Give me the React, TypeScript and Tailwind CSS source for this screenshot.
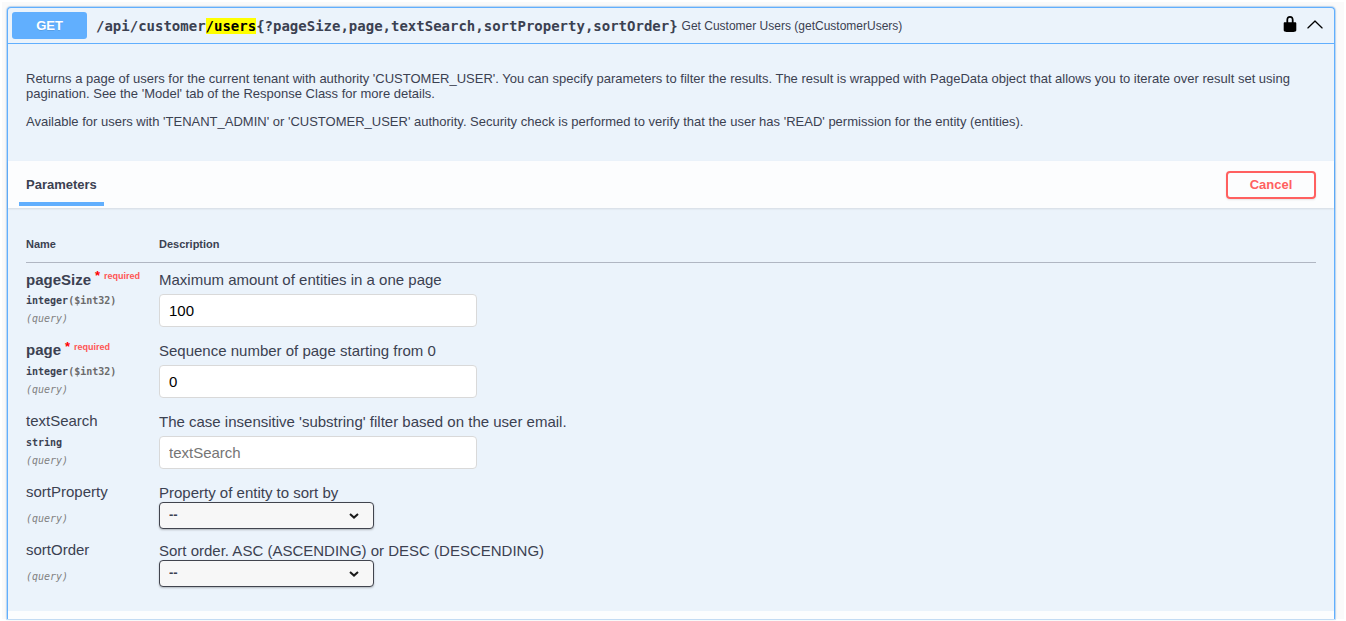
import { useState } from "react";

type Param = {
  name: string;
  type?: string;
  required?: boolean;
  description: string;
  value?: string;
  select?: boolean;
};

const params: Param[] = [
  { name: "pageSize", type: "integer", required: true, description: "Maximum amount of entities in a one page", value: "100" },
  { name: "page", type: "integer", required: true, description: "Sequence number of page starting from 0", value: "0" },
  { name: "textSearch", type: "string", description: "The case insensitive 'substring' filter based on the user email.", value: "" },
  { name: "sortProperty", description: "Property of entity to sort by", select: true },
  { name: "sortOrder", description: "Sort order. ASC (ASCENDING) or DESC (DESCENDING)", select: true },
];

const mono = "font-['DejaVu_Sans_Mono',monospace]";

function LockIcon() {
  return (
    <svg viewBox="0 0 20 20" className="size-[18px]" aria-hidden="true">
      <path d="M15.8 8H14V5.6C14 2.703 12.665 1 10 1 7.334 1 6 2.703 6 5.6V8H4c-.553 0-1 .646-1 1.199V17c0 .549.428 1.139.951 1.307l1.197.387C5.672 18.861 6.55 19 7.1 19h5.8c.549 0 1.428-.139 1.951-.307l1.196-.387c.524-.167.953-.757.953-1.306V9.199C17 8.646 16.352 8 15.8 8zM12 8H8V5.199C8 3.754 8.797 3 10 3c1.203 0 2 .754 2 2.199V8z" />
    </svg>
  );
}

function CollapseIcon() {
  return (
    <svg viewBox="0 0 20 20" className="size-[18px]" aria-hidden="true">
      <path d="M17.418 14.908c.272.281.701.281.969 0s.271-.736 0-1.018l-7.908-7.83a.697.697 0 0 0-.969 0L1.602 13.89c-.268.282-.268.737 0 1.018s.701.281.969 0L10 7.767l7.418 7.141z" />
    </svg>
  );
}

function ParamRow({ param }: { param: Param }) {
  const [value, setValue] = useState(param.value ?? "");
  const id = "param-" + param.name;
  return (
    <tr className="align-top">
      <td className="w-[133px] pt-[7px]">
        <label
          htmlFor={id}
          className={"flex h-5 items-center gap-1 text-[15px] whitespace-nowrap" + (param.required ? " font-bold" : "")}
        >
          {param.name}
          {param.required && (
            <span className="mb-2 flex gap-1 text-[9px] leading-3 text-[#ff0000]">
              <span className="text-[13px]">*</span>
              <span className="text-[#ff5555]">required</span>
            </span>
          )}
        </label>
        {param.type && (
          <div className={mono + " h-[21px] text-[10px] leading-[22px] font-bold"}>
            {param.type}
            {param.type === "integer" && <span className="text-[#6b6b6b]">($int32)</span>}
          </div>
        )}
        <div className={mono + " text-[10px] text-[#808080] italic " + (param.type ? "leading-4" : "pt-1 leading-6")}>(query)</div>
      </td>
      <td className={param.select ? "h-[58px] pt-[7px]" : "h-[71px] pt-[7px]"}>
        <p className="h-[19px] text-[15px] leading-5">{param.description}</p>
        {param.select ? (
          <div className="relative w-[215px]">
            <select
              id={id}
              className="block h-[27px] w-full appearance-none rounded border border-[#41444e] bg-[#f7f7f7] px-[9px] text-[13px] font-bold shadow-[0_1px_2px_0_rgba(0,0,0,0.25)]"
            >
              <option>--</option>
            </select>
            <svg
              viewBox="0 0 10 6"
              className="pointer-events-none absolute top-[11px] right-[15px] h-[6px] w-[10px]"
              fill="none"
              stroke="#1b1b1b"
              strokeWidth="2"
              aria-hidden="true"
            >
              <path d="M1 1l4 3.6L9 1" />
            </svg>
          </div>
        ) : (
          <input
            id={id}
            type="text"
            value={value}
            placeholder={param.name}
            onChange={(e) => setValue(e.target.value)}
            className="mt-[5px] block h-[33px] w-[318px] rounded border border-[#d9d9d9] bg-white px-[9px] text-[15px] text-black placeholder:text-[#757575]"
          />
        )}
      </td>
    </tr>
  );
}

export default function App() {
  return (
    <div className="min-h-screen bg-white px-[2px] pt-[2px] font-['Liberation_Sans',Arial,sans-serif] text-[#3b4151]">
      <main className="bg-[#fafafa] pt-[5px] pr-[9px] pl-[5px]">
        <section className="rounded-t border border-b-0 border-[#61affe] bg-[#ebf3fb] shadow-[0_0_0_1px_rgba(97,175,254,0.3),0_0_3px_rgba(0,0,0,0.19)]">
          <header className="flex items-center border-b border-[#61affe] p-1">
            <span className="w-[75px] rounded-[3px] bg-[#61affe] text-center text-[13px] leading-[27px] font-bold text-white [text-shadow:0_1px_0_rgba(0,0,0,0.1)]">
              GET
            </span>
            <h1 className={mono + " ml-[9px] text-[14px] leading-[18px] font-bold whitespace-nowrap"}>
              /api/customer<mark className="bg-[#ffff00] text-black">/users</mark>
              {"{?pageSize,page,textSearch,sortProperty,sortOrder}"}
            </h1>
            <span className="ml-1 grow text-[12px]">Get Customer Users (getCustomerUsers)</span>
            <button type="button" aria-label="Authorization" className="mr-[7px] mb-1 text-black">
              <LockIcon />
            </button>
            <button type="button" aria-label="Collapse" className="mr-[6px] mb-1 text-black">
              <CollapseIcon />
            </button>
          </header>

          <div className="space-y-[13px] px-[18px] pt-[27px] pb-8 text-[13px] leading-[15px]">
            <p>
              Returns a page of users for the current tenant with authority 'CUSTOMER_USER'. You can specify parameters to
              filter the results. The result is wrapped with PageData object that allows you to iterate over result set
              using pagination. See the 'Model' tab of the Response Class for more details.
            </p>
            <p>
              Available for users with 'TENANT_ADMIN' or 'CUSTOMER_USER' authority. Security check is performed to verify
              that the user has 'READ' permission for the entity (entities).
            </p>
          </div>

          <div className="flex h-[47px] items-center justify-between bg-[#fcfdfe] pr-[18px] pl-[11px] shadow-[0_1px_2px_rgba(0,0,0,0.1)]">
            <h2 className="h-full text-[13px] font-bold">
              <span className="block h-[45px] border-b-4 border-[#61affe] px-[7px] leading-[47px]">Parameters</span>
            </h2>
            <button
              type="button"
              className="h-7 w-[90px] rounded border-2 border-[#ff6060] text-[13px] font-bold text-[#ff6060] shadow-[0_1px_2px_rgba(0,0,0,0.1)]"
            >
              Cancel
            </button>
          </div>

          <div className="px-[18px] pt-[26px] pb-[19px]">
            <table className="w-full border-collapse">
              <thead>
                <tr className="border-b border-[#b0b6c2] text-left text-[11px] leading-5">
                  <th className="pb-2 font-bold">Name</th>
                  <th className="pb-2 font-bold">Description</th>
                </tr>
              </thead>
              <tbody>
                {params.map((p) => (
                  <ParamRow key={p.name} param={p} />
                ))}
              </tbody>
            </table>
          </div>
          <div className="h-2 bg-[#fcfdfe]" />
        </section>
      </main>
    </div>
  );
}
